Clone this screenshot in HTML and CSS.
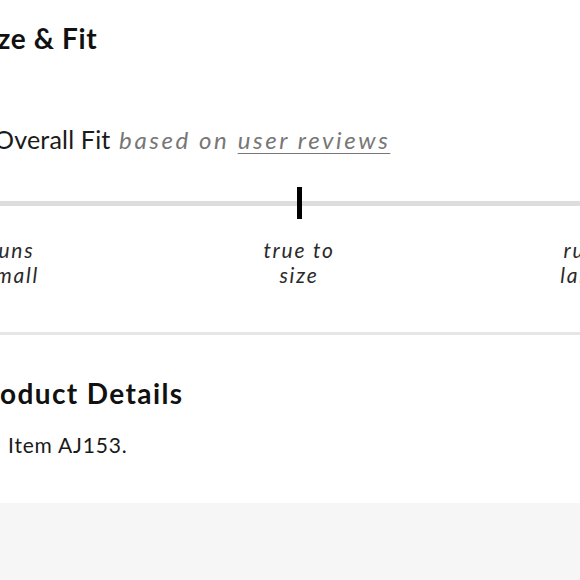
FILE: index.html
```html
<!DOCTYPE html>
<html lang="en">
<head>
<meta charset="utf-8">
<title>Size &amp; Fit</title>
<link rel="stylesheet" href="styles.css">
</head>
<body>
<div class="page">
  <section class="size-fit">
    <h2 class="heading">Size &amp; Fit</h2>
    <div class="fit">
      <p class="fit-title">Overall Fit <span class="fit-source">based on <a class="fit-link" href="#">user reviews</a></span></p>
      <div class="track">
        <span class="marker"></span>
      </div>
      <div class="labels">
        <span class="label">runs<br>small</span>
        <span class="label">true to<br>size</span>
        <span class="label">runs<br>large</span>
      </div>
    </div>
  </section>
  <hr class="divider">
  <section class="details">
    <h2 class="heading heading-details">Product Details</h2>
    <ul class="detail-list">
      <li class="detail-item">Item AJ153.</li>
    </ul>
  </section>
  <div class="footer-band"></div>
</div>
</body>
</html>
```

FILE: styles.css
```css
html, body {
  margin: 0;
  padding: 0;
  background: #ffffff;
  overflow: hidden;
}

body {
  width: 580px;
  height: 580px;
  font-family: "Lato", "Open Sans", sans-serif;
  color: #1a1a1a;
}

.page {
  margin-left: -26px;
  width: 640px;
  height: 580px;
  display: flex;
  flex-direction: column;
}

.heading {
  margin: 0;
  font-size: 28px;
  font-weight: 700;
  line-height: 32px;
  color: #111111;
  letter-spacing: 0.6px;
}

.heading-details {
  margin-left: -4px;
  letter-spacing: 1.4px;
}

.size-fit {
  padding-top: 22px;
}

.fit {
  margin-left: 8px;
  width: 634px;
  padding-top: 70px;
}

.fit-title {
  margin: 0 0 0 12px;
  font-size: 25px;
  line-height: 30px;
  letter-spacing: 0.2px;
  color: #1a1a1a;
}

.fit-source {
  margin-left: 2px;
  font-style: italic;
  color: #777777;
  letter-spacing: 2.6px;
  font-size: 24px;
}

.fit-link {
  color: #777777;
  text-decoration: underline;
  text-underline-offset: 4px;
  text-decoration-thickness: 1px;
}

.track {
  position: relative;
  margin-top: 46px;
  height: 5px;
  background: #dddddd;
}

.marker {
  position: absolute;
  left: 50%;
  top: -14px;
  width: 5px;
  height: 32px;
  margin-left: -2px;
  background: #000000;
}

.labels {
  display: flex;
  justify-content: space-between;
  margin-top: 31px;
}

.label {
  width: 60px;
  text-align: center;
  font-style: italic;
  font-size: 21px;
  line-height: 25px;
  letter-spacing: 1.8px;
  color: #2a2a2a;
  white-space: nowrap;
  display: flex;
  justify-content: center;
}

.divider {
  margin: 45px 0 0 0;
  border: 0;
  height: 3px;
  background: #e6e6e6;
}

.details {
  padding-top: 42px;
}

.detail-list {
  margin: 23px 0 0 0;
  padding: 0 0 0 34px;
  list-style: none;
}

.detail-item {
  font-size: 21px;
  line-height: 26px;
  letter-spacing: 0.8px;
  color: #1a1a1a;
}

.footer-band {
  margin-top: 45px;
  flex: 1;
  background: #f6f6f6;
}
```
